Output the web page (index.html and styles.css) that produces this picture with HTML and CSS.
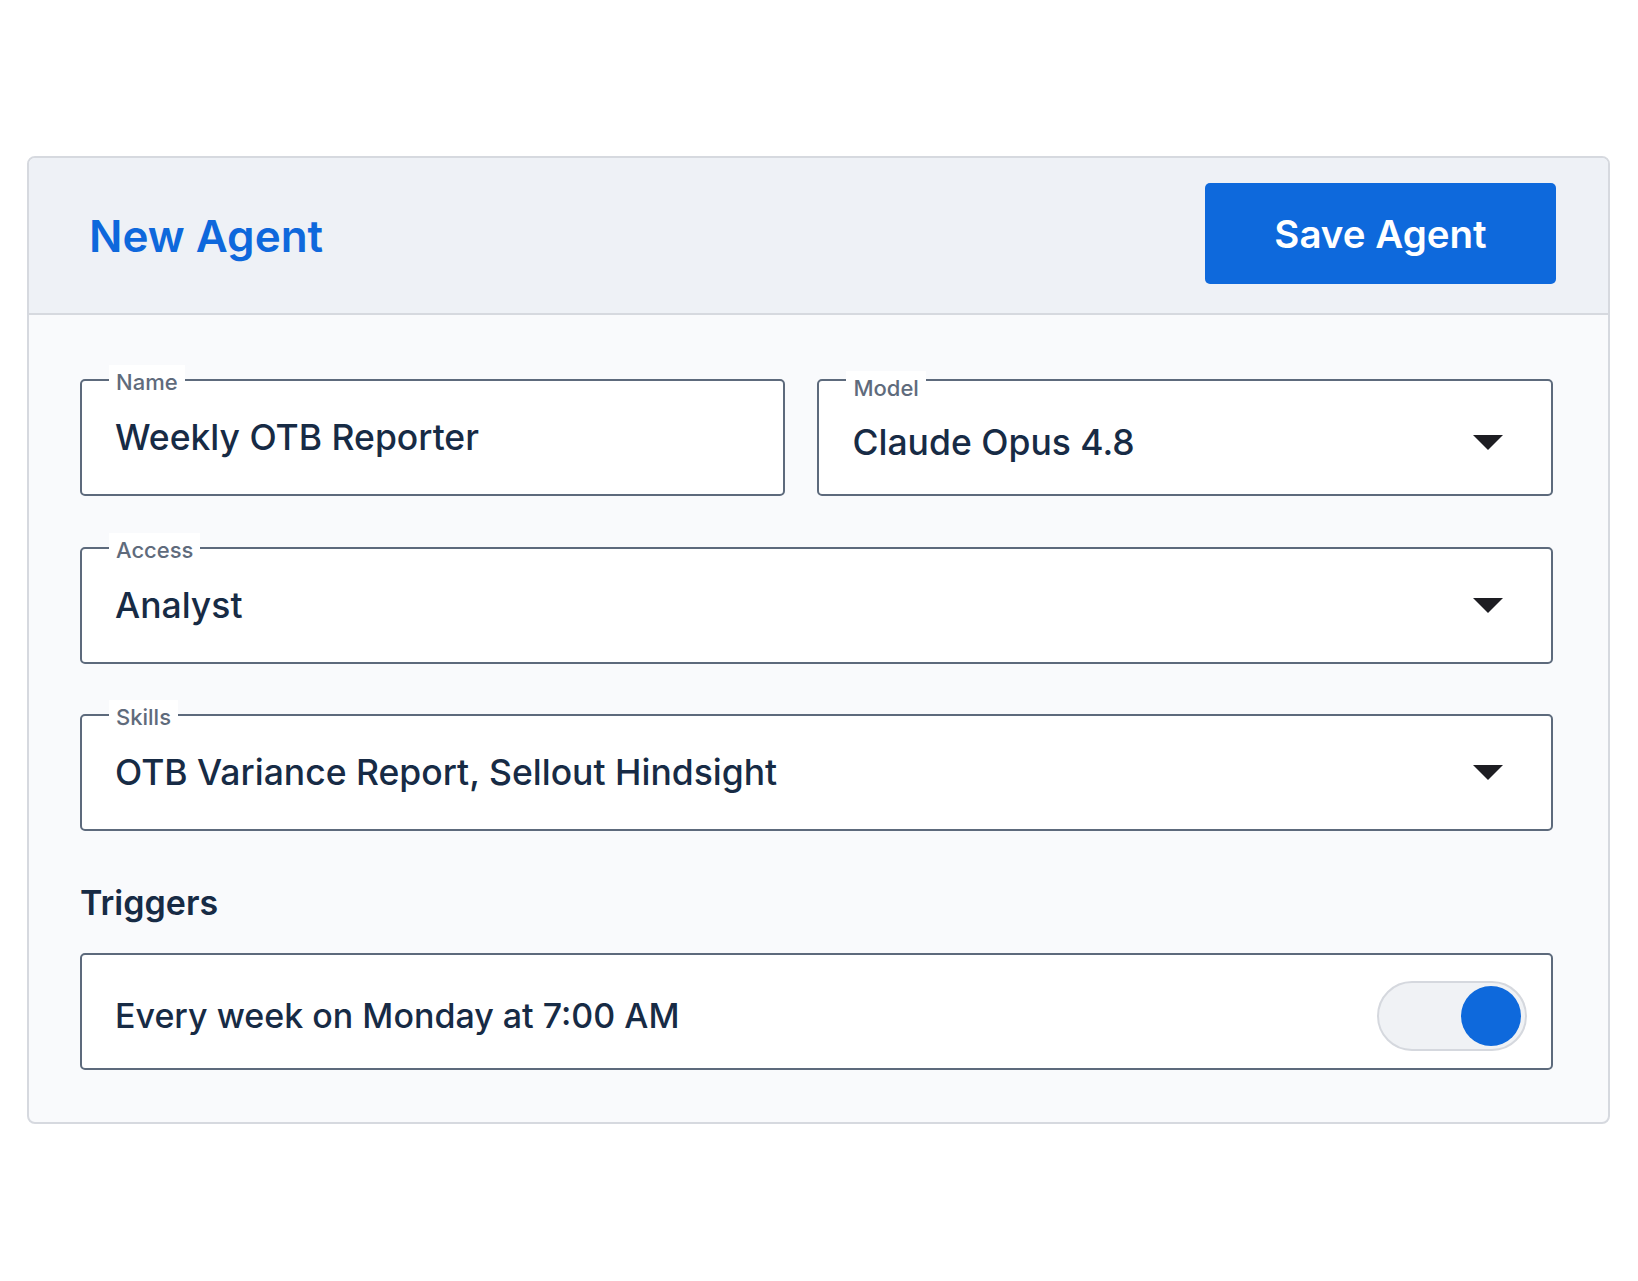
FILE: index.html
```html
<!DOCTYPE html>
<html lang="en">
<head>
  <meta charset="UTF-8" />
  <meta name="viewport" content="width=device-width, initial-scale=1.0"/>
  <title>New Agent</title>
  <link rel="stylesheet" href="styles.css">
</head>
<body>
  <div class="card">
    <!-- Header -->
    <div class="card-header">
      <h1>New Agent</h1>
      <button class="save-btn">Save Agent</button>
    </div>

    <!-- Form -->
    <div class="card-body">
      <div class="field-row">
        <div class="field">
          <span class="field-label">Name</span>
          <span class="field-value">Weekly OTB Reporter</span>
        </div>
        <div class="field field-select field-model">
          <span class="field-label">Model</span>
          <span class="field-value">Claude Opus 4.8</span>
          <svg class="caret" width="30" height="15" viewBox="0 0 30 15"><polygon points="0,0 30,0 15,15" fill="#1d1d22"/></svg>
        </div>
      </div>

      <div class="field field-select">
        <span class="field-label">Access</span>
        <span class="field-value">Analyst</span>
        <svg class="caret" width="30" height="15" viewBox="0 0 30 15"><polygon points="0,0 30,0 15,15" fill="#1d1d22"/></svg>
      </div>

      <div class="field field-select">
        <span class="field-label">Skills</span>
        <span class="field-value">OTB Variance Report, Sellout Hindsight</span>
        <svg class="caret" width="30" height="15" viewBox="0 0 30 15"><polygon points="0,0 30,0 15,15" fill="#1d1d22"/></svg>
      </div>

      <h2 class="section-title">Triggers</h2>

      <div class="trigger">
        <span class="field-value trigger-text">Every week on Monday at 7:00 AM</span>
        <div class="toggle">
          <div class="toggle-knob"></div>
        </div>
      </div>
    </div>
  </div>
</body>
</html>
```

FILE: styles.css
```css
* {
  box-sizing: border-box;
}

body {
  font-family: Inter, "Noto Sans", sans-serif;
  margin: 0;
  padding: 156px 28px 0 27px;
  background: #fff;
  color: #172b45;
}

.card {
  background: #f9fafc;
  border: 2px solid #d6d9df;
  border-radius: 8px;
  overflow: hidden;
}

.card-header {
  height: 157px;
  display: flex;
  align-items: center;
  justify-content: space-between;
  padding: 0 52px 0 60px;
  background: #eef1f6;
  border-bottom: 2px solid #d6d9df;
}

.card-header h1 {
  margin: 0;
  font-size: 44px;
  font-weight: 600;
  color: #0e68dc;
}

.save-btn {
  width: 351px;
  height: 101px;
  margin-top: -4px;
  background: #0e69dc;
  color: #fff;
  border: none;
  border-radius: 5px;
  font-family: inherit;
  font-size: 38.5px;
  font-weight: 600;
  cursor: pointer;
}

.card-body {
  padding: 64px 55px 52px 51px;
}

.field-row {
  display: grid;
  grid-template-columns: 705fr 735fr;
  gap: 32px;
  margin-bottom: 51px;
}

.field {
  position: relative;
  height: 117px;
  display: flex;
  align-items: center;
  padding: 0 48px 0 33px;
  background: #fff;
  border: 2px solid #5d6a7c;
  border-radius: 5px;
  margin-bottom: 50px;
}

.field-row .field {
  margin-bottom: 0;
}

/* floating label sitting on the top border */
.field-label {
  position: absolute;
  top: -16px;
  left: 27px;
  padding: 0 7px;
  background: #fff;
  font-size: 22px;
  font-weight: 500;
  line-height: 34px;
  color: #5f6b7c;
}

.field-model .field-label {
  top: -10px;
}

.field-model {
  padding-top: 10px;
}

.field-value {
  flex: 1;
  font-size: 35.5px;
  font-weight: 500;
  white-space: nowrap;
}

.caret {
  flex-shrink: 0;
}

.section-title {
  margin: 52px 0 30px;
  font-size: 34px;
  font-weight: 600;
  line-height: 40px;
}

.trigger {
  height: 117px;
  display: flex;
  align-items: center;
  padding: 8px 24px 0 33px;
  background: #fff;
  border: 2px solid #5d6a7c;
  border-radius: 5px;
}

.trigger-text {
  font-size: 34px;
}

.toggle {
  width: 150px;
  height: 70px;
  display: flex;
  align-items: center;
  justify-content: flex-end;
  padding: 0 4px;
  background: #f0f2f5;
  border: 2px solid #d5d8de;
  border-radius: 35px;
}

.toggle-knob {
  width: 60px;
  height: 60px;
  border-radius: 50%;
  background: #0e69dc;
}
```
